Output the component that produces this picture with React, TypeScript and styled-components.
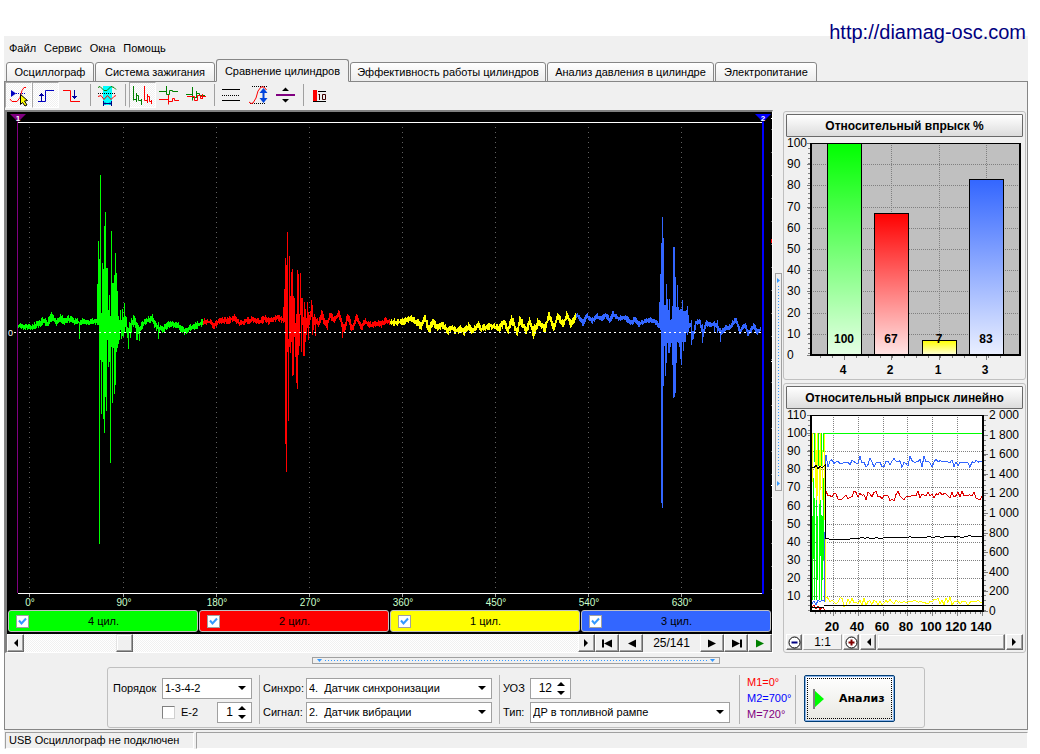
import React from 'react';
import styled, { createGlobalStyle } from 'styled-components';

const ui = '"Liberation Sans", Arial, sans-serif';
const GREEN = '#00ff00';
const RED = '#ff0000';
const YELLOW = '#ffff00';
const BLUE = '#3366ff';

const GlobalStyle = createGlobalStyle`
  * { box-sizing: border-box; }
  body { margin: 0; background: #fff; font: 11px/14px ${ui}; color: #000; }
  button, input, select { font: inherit; color: inherit; margin: 0; }
`;

/* ---------- shell ---------- */
const Page = styled.div`
  padding: 0 12px 4px 4px;
  min-width: 960px;
`;
const SiteBar = styled.header`
  height: 36px;
  display: flex;
  justify-content: flex-end;
  align-items: flex-end;
  overflow: visible;
`;
const SiteLink = styled.a`
  position: relative;
  z-index: 2;
  font-size: 20px;
  line-height: 24px;
  color: #000080;
  text-decoration: none;
  margin-bottom: -8px;
  padding-right: 2px;
`;
const AppWindow = styled.main`
  background: #f0f0f0;
`;
const MenuBar = styled.nav`
  display: flex;
  align-items: center;
  gap: 8px;
  height: 23px;
  padding: 0 5px;
`;
const MenuItem = styled.button`
  border: 0;
  padding: 0;
  background: none;
`;
const TabBar = styled.div`
  display: flex;
  align-items: flex-end;
  height: 23px;
  padding-left: 2px;
  gap: 1px;
  margin-bottom: -1px;
`;
const Tab = styled.button<{ $w: number; $active?: boolean }>`
  width: ${p => p.$w}px;
  height: ${p => (p.$active ? 23 : 20)}px;
  padding: 0;
  white-space: nowrap;
  border: 1px solid #868686;
  border-bottom-color: ${p => (p.$active ? '#f0f0f0' : '#868686')};
  border-radius: 3px 3px 0 0;
  background: ${p => (p.$active ? '#f0f0f0' : 'linear-gradient(#fff, #ececec)')};
`;
const Panel = styled.section`
  border: 1px solid #868686;
  padding-bottom: 1px;
`;
const ToolBar = styled.div`
  display: flex;
  height: 28px;
`;
const ToolButton = styled.button<{ $on?: boolean }>`
  width: 27px;
  height: 26px;
  padding: 0;
  border: 1px solid;
  border-color: ${p => (p.$on ? '#a8a8a8 #fff #fff #a8a8a8' : 'transparent')};
  background: ${p => (p.$on ? 'repeating-conic-gradient(#fff 0 25%, #f0f0f0 0 50%) 0 0 / 2px 2px' : 'none')};
  svg { display: block; margin: -1px; }
`;
const ToolSeparator = styled.span`
  width: 1px;
  height: 22px;
  margin: 2px 3px 0 4px;
  background: #a0a0a0;
`;
const WorkArea = styled.div`
  display: flex;
  padding-right: 1px;
`;

/* ---------- scope ---------- */
const ScopeFrame = styled.div`
  flex: 1;
  min-width: 0;
  border: solid;
  border-width: 2px 1px 1px 2px;
  border-color: #808080 #fff #fff #808080;
`;
const ScopeScreen = styled.svg`
  display: block;
  width: 100%;
  height: 497px;
  background: #000;
`;
const CylinderBar = styled.div`
  display: flex;
  gap: 1px;
  padding: 1px 1px 2px;
  background: #000;
`;
const CylinderCell = styled.label<{ $color: string }>`
  flex: 1;
  display: flex;
  align-items: center;
  height: 22px;
  padding: 0 7px;
  border: 1px solid #c0c0c0;
  border-radius: 3px;
  background: ${p => p.$color};
`;
const CylinderName = styled.span`
  flex: 1;
  text-align: center;
  padding-right: 12px;
`;
const Check = styled.input`
  appearance: none;
  width: 13px;
  height: 13px;
  border: 1px solid #a0a0a0;
  background: #fff;
  &:checked {
    background: #fff url("data:image/svg+xml,%3Csvg xmlns='http://www.w3.org/2000/svg' viewBox='0 0 11 11'%3E%3Cpath d='M2 4.500L4.500 7.500L9 2.500' fill='none' stroke='%233399ff' stroke-width='2'/%3E%3C/svg%3E");
  }
`;
const ScrollRow = styled.div`
  display: flex;
  height: 18px;
  background: #f0f0f0;
`;
const ScrollTrack = styled.div`
  flex: 1;
  display: flex;
  padding-left: 92px;
  background: repeating-conic-gradient(#fff 0 25%, #f0f0f0 0 50%) 0 0 / 2px 2px;
`;
const Thumb = styled.span<{ $wide?: boolean }>`
  width: ${p => (p.$wide ? 'auto' : '17px')};
  flex: ${p => (p.$wide ? '1' : 'none')};
  border: 1px solid;
  border-color: #e3e3e3 #696969 #696969 #e3e3e3;
  box-shadow: inset -1px -1px #a0a0a0, inset 1px 1px #fff;
  background: #f0f0f0;
`;
const KeyButton = styled.button<{ $w: number }>`
  width: ${p => p.$w}px;
  padding: 0;
  display: flex;
  align-items: center;
  justify-content: center;
  border: 1px solid;
  border-color: #fff #696969 #696969 #fff;
  box-shadow: inset -1px -1px #a0a0a0;
  background: #f0f0f0;
`;
const FrameCounter = styled.output`
  width: 57px;
  text-align: center;
  font-size: 12px;
  line-height: 18px;
`;

/* ---------- splitters ---------- */
const SplitColumn = styled.div`
  width: 10px;
  display: flex;
  align-items: center;
  justify-content: center;
`;
const SplitRow = styled.div`
  height: 14px;
  display: flex;
  align-items: center;
  justify-content: center;
`;
const Grip = styled.button<{ $vertical?: boolean }>`
  display: flex;
  flex-direction: ${p => (p.$vertical ? 'column' : 'row')};
  align-items: center;
  gap: 3px;
  padding: ${p => (p.$vertical ? '4px 0' : '0 4px')};
  width: ${p => (p.$vertical ? 7 : 408)}px;
  height: ${p => (p.$vertical ? 218 : 7)}px;
  border: 1px solid #a0a0a0;
  background: #f0f0f0;
  svg { flex: none; }
`;
const GripDots = styled.span<{ $vertical?: boolean }>`
  flex: 1;
  width: ${p => (p.$vertical ? '1px' : 'auto')};
  height: ${p => (p.$vertical ? 'auto' : '1px')};
  background: repeating-linear-gradient(${p => (p.$vertical ? 'to bottom' : 'to right')}, #3399ff 0 1px, transparent 1px 3px);
`;

/* ---------- right side ---------- */
const SideColumn = styled.aside`
  width: 243px;
  padding-top: 1px;
  display: flex;
  flex-direction: column;
  gap: 3px;
`;
const ChartCard = styled.section`
  border: 1px solid #c0c0c0;
  border-radius: 3px;
  padding: 2px;
  background: #f0f0f0;
  svg { display: block; }
`;
const ChartTitle = styled.button`
  display: block;
  width: 100%;
  height: 23px;
  padding: 0;
  border: 1px solid #696969;
  border-radius: 1px;
  font-weight: bold;
  font-size: 12px;
  background: linear-gradient(#fff, #dcdcdc);
`;
const ZoomRow = styled.div`
  display: flex;
  gap: 1px;
  height: 16px;
`;
const Ratio = styled.output`
  width: 39px;
  border: 1px solid;
  border-color: #fff #a0a0a0 #a0a0a0 #fff;
  text-align: center;
  font-size: 12px;
  line-height: 14px;
`;

/* ---------- control strip ---------- */
const ControlBox = styled.form`
  width: 818px;
  height: 61px;
  margin: 0 auto;
  padding: 7px 5px 3px;
  display: flex;
  border: 1px solid #c0c0c0;
  border-radius: 3px;
`;
const Fields = styled.div<{ $label: number }>`
  display: grid;
  grid-template-columns: ${p => p.$label}px auto;
  grid-template-rows: 20px 20px;
  row-gap: 4px;
  align-items: center;
  padding-top: 3px;
`;
const VRule = styled.span<{ $before: number; $after: number }>`
  width: 1px;
  height: 49px;
  margin: 0 ${p => p.$after}px 0 ${p => p.$before}px;
  background: #b4b4b4;
`;
const Combo = styled.div<{ $w: number }>`
  position: relative;
  width: ${p => p.$w}px;
  height: 21px;
  svg { position: absolute; right: 6px; top: 8px; pointer-events: none; }
`;
const Select = styled.select`
  appearance: none;
  display: block;
  width: 100%;
  height: 100%;
  padding: 0 16px 0 2px;
  border: 1px solid #a0a0a0;
  border-radius: 0;
  background: #fff;
  white-space: pre;
`;
const SpinBox = styled.span<{ $w: number }>`
  display: flex;
  align-items: center;
  width: ${p => p.$w}px;
  height: 21px;
  padding-right: 5px;
  border: 1px solid #a0a0a0;
  background: #fff;
`;
const SpinInput = styled.input`
  flex: 1;
  min-width: 0;
  padding: 0 5px 0 0;
  border: 0;
  background: none;
  text-align: right;
  font-size: 12px;
`;
const SpinLine = styled.div`
  display: flex;
  align-items: center;
  justify-content: space-between;
`;
const PlainCheck = styled(Check)`
  border-color: #808080 #d0d0d0 #d0d0d0 #808080;
`;
const CheckLabel = styled.label`
  display: flex;
  align-items: center;
  gap: 6px;
`;
const Marks = styled.div`
  width: 48px;
  display: flex;
  flex-direction: column;
  gap: 2px;
`;
const Mark = styled.span<{ $color: string }>`
  color: ${p => p.$color};
  line-height: 14px;
`;
const RunButton = styled.button`
  display: flex;
  align-items: center;
  gap: 14px;
  width: 91px;
  height: 47px;
  padding: 0 8px;
  border: 1px solid #003c74;
  border-radius: 2px;
  box-shadow: inset 0 0 0 1px #8ab4ea;
  outline: 1px dotted #000;
  outline-offset: -4px;
  background: linear-gradient(#fff, #e8e8e2);
  font: bold 11px/14px "DejaVu Sans", sans-serif;
`;

const StatusBar = styled.footer`
  display: flex;
  gap: 2px;
  height: 19px;
  padding: 2px 0 0 1px;
`;
const StatusCell = styled.span<{ $w?: number }>`
  flex: ${p => (p.$w ? 'none' : '1')};
  width: ${p => (p.$w ? `${p.$w}px` : 'auto')};
  padding-left: 3px;
  line-height: 15px;
  border: 1px solid;
  border-color: #a0a0a0 #fff #fff #a0a0a0;
`;

/* ---------- signal data ---------- */
type Pt = [number, number];
type Spike = [number, number, number];

function rng(seed: number) {
  let s = seed;
  return () => {
    s = (s * 16807) % 2147483647;
    return s / 2147483647;
  };
}

function levelAt(points: Pt[], x: number) {
  for (let i = 1; i < points.length; i++) {
    if (x <= points[i][0]) {
      const [x0, y0] = points[i - 1];
      const [x1, y1] = points[i];
      return y0 + ((y1 - y0) * (x - x0)) / (x1 - x0 || 1);
    }
  }
  return points[points.length - 1][1];
}

function envelope(points: Pt[], spikes: Spike[], amp: number, seed: number) {
  const rand = rng(seed);
  const byX = new Map(spikes.map(s => [s[0], s] as const));
  let d = '';
  let prev = points[0][1];
  for (let x = points[0][0]; x < points[points.length - 1][0]; x++) {
    const s = byX.get(x);
    const mid = levelAt(points, x);
    let top = Math.round(Math.min(mid, prev) - 1 - rand() * amp);
    let bottom = Math.round(Math.max(mid, prev) + 1 + rand() * amp);
    if (s) {
      top = s[1];
      bottom = s[2];
    }
    prev = mid;
    d += `M${x + 0.5} ${top}V${bottom}`;
  }
  return d;
}

const traces = [
  {
    color: GREEN, amp: 3, seed: 11,
    base: [[18,326],[30,327],[37,325],[42,321],[47,323],[51,316],[55,323],[60,317],[63,322],[68,319],[75,322],[90,322],[97,321],[118,325],[130,326],[133,320],[138,330],[144,322],[151,318],[156,328],[162,329],[168,324],[176,325],[183,331],[190,328],[197,325],[203,322]] as Pt[],
    spikes: [[79,322,339],[97,284,325],[98,241,325],[99,259,544],[100,175,360],[101,313,414],[102,263,362],[103,269,419],[104,226,433],[105,212,397],[106,268,411],[107,268,340],[108,310,367],[109,295,362],[110,316,463],[111,231,347],[112,283,403],[113,283,348],[114,275,394],[115,253,385],[116,273,352],[117,291,348],[118,316,344],[119,320,340],[120,310,330],[121,320,339],[122,309,336],[123,317,337],[124,303,332],[125,316,327],[126,317,333],[127,327,338],[128,328,349],[129,322,333],[130,323,338],[131,318,333],[133,315,327],[136,322,340],[137,323,340],[139,327,341],[158,322,339]] as Spike[],
  },
  {
    color: RED, amp: 3, seed: 29,
    base: [[203,322],[210,322],[213,325],[220,320],[226,321],[233,318],[238,323],[245,321],[252,320],[260,321],[264,318],[268,321],[276,317],[283,320],[316,321],[318,324],[321,312],[323,321],[326,326],[329,315],[333,321],[338,313],[341,324],[343,330],[347,316],[351,329],[356,317],[360,327],[364,322],[370,325],[380,324],[385,321],[390,322]] as Pt[],
    spikes: [[283,307,323],[284,289,322],[285,258,444],[286,265,472],[287,232,352],[288,339,421],[289,256,347],[290,296,353],[291,272,342],[292,269,376],[293,296,375],[294,298,337],[295,323,357],[296,314,383],[297,270,389],[298,274,355],[299,314,346],[300,273,315],[301,298,352],[302,298,325],[303,317,356],[304,302,356],[305,309,342],[306,318,335],[307,302,328],[308,312,340],[309,315,325],[310,311,320],[311,300,317],[312,305,335],[313,317,330],[314,314,325],[315,317,336],[342,322,338]] as Spike[],
  },
  {
    color: YELLOW, amp: 3, seed: 47,
    base: [[390,322],[400,322],[410,319],[417,323],[420,326],[424,318],[428,330],[432,322],[436,328],[441,324],[447,331],[451,327],[455,331],[460,328],[463,332],[468,326],[471,331],[477,325],[480,329],[485,327],[492,326],[498,329],[503,322],[507,330],[511,319],[516,333],[519,319],[525,331],[529,321],[533,335],[537,322],[544,329],[548,315],[553,328],[557,315],[562,325],[566,315],[570,325],[576,314]] as Pt[],
    spikes: [[532,326,336],[533,326,339],[534,324,336]] as Spike[],
  },
  {
    color: BLUE, amp: 2, seed: 83,
    base: [[576,315],[582,323],[586,316],[591,321],[596,316],[600,319],[605,315],[609,321],[612,314],[618,319],[624,317],[630,323],[634,319],[638,324],[645,321],[650,320],[656,323],[659,327],[688,325],[690,326],[692,338],[695,322],[699,322],[702,335],[705,323],[709,325],[713,324],[716,325],[720,334],[724,328],[728,328],[735,320],[739,331],[744,325],[747,334],[753,326],[756,333],[761,328]] as Pt[],
    spikes: [[659,302,328],[660,274,330],[661,243,503],[662,217,508],[663,238,386],[664,305,346],[665,305,376],[666,284,363],[667,299,343],[668,310,353],[669,299,353],[670,320,347],[671,319,343],[672,306,365],[673,247,398],[674,247,397],[675,277,393],[676,307,363],[677,285,342],[678,307,343],[679,310,347],[680,309,359],[681,309,365],[682,300,342],[683,311,351],[684,311,342],[685,311,342],[686,310,333],[687,306,335],[688,315,332],[691,320,345],[702,324,343],[720,328,342],[717,320,333],[714,321,333]] as Spike[],
  },
];

const angles = [0, 90, 180, 270, 360, 450, 540, 630];
const angleX = (i: number) => (i === 0 ? 29 : 123 + (i - 1) * 93);
const share = (x: number) => `${((x - 7) / 765) * 100}%`;

function Scope() {
  return (
    <ScopeScreen role="img" aria-label="Осциллограмма">
      <svg width="100%" height="100%" viewBox="7 112 765 497" preserveAspectRatio="none" shapeRendering="crispEdges">
        {angles.map((a, i) => (
          <g key={a}>
            <path d={`M${angleX(i) + 0.5} 127V590`} stroke="#606060" strokeDasharray="1 4" />
            <path d={`M${angleX(i) + 0.5} 594V597`} stroke="#a0a0a0" />
          </g>
        ))}
        <path d="M18 122.500H763M18 593.500H763" stroke="#fff" />
        <path d="M17.500 122V593" stroke="#800080" />
        <path d="M763 122V594" stroke="#0000ff" strokeWidth="2" />
        <path d="M771.500 129V590" stroke="#707070" strokeDasharray="1 22" />
        <path d="M771.500 118v1M771.500 361v1M771.500 485v1" stroke="#fff" />
        <path d="M771.500 239v4" stroke="#ff0000" />
        {traces.map(t => (
          <path key={t.color} d={envelope(t.base, t.spikes, t.amp, t.seed)} stroke={t.color} fill="none" />
        ))}
        <path d="M14 332.500H761" stroke="#fff" strokeDasharray="2 3" />
      </svg>
      <svg x={share(17)} y="2" overflow="visible">
        <path d="M-7 0H9L1 8Z" fill="#800080" />
        <text x="1" y="7" fill="#fff" fontSize="8" fontWeight="bold" textAnchor="middle">1</text>
      </svg>
      <svg x={share(762)} y="2" overflow="visible">
        <path d="M-7 0H9L1 8Z" fill="#0000ff" />
        <text x="1" y="7" fill="#fff" fontSize="8" fontWeight="bold" textAnchor="middle">2</text>
      </svg>
      <text x="1" y="224" fill="#fff" fontSize="9">0</text>
      {angles.map((a, i) => (
        <text key={a} x={share(angleX(i) + 1)} y="494" fill="#ccffcc" fontSize="10" textAnchor="middle">{a}°</text>
      ))}
    </ScopeScreen>
  );
}

/* ---------- bar chart ---------- */
const bars = [
  { cyl: 4, value: 100, color: GREEN, x: 827, top: 143 },
  { cyl: 2, value: 67, color: RED, x: 874, top: 213 },
  { cyl: 1, value: 7, color: YELLOW, x: 922, top: 340 },
  { cyl: 3, value: 83, color: BLUE, x: 969, top: 179 },
];

function BarChart() {
  const rows = Array.from({ length: 11 }, (_, i) => ({ v: 100 - i * 10, y: Math.round(143 + i * 21.2) }));
  return (
    <svg width="100%" viewBox="786 137 237 240" overflow="visible" fontFamily={ui} fontSize="12" role="img" aria-label="Относительный впрыск %">
      <defs>
        {bars.map(b => (
          <linearGradient key={b.cyl} id={`bar${b.cyl}`} x1="0" y1="0" x2="0" y2="1">
            <stop offset="0" stopColor={b.color} />
            <stop offset="1" stopColor={b.color} stopOpacity="0.1" />
          </linearGradient>
        ))}
      </defs>
      <g shapeRendering="crispEdges">
        <rect x="810" y="143" width="211" height="212" fill="#c0c0c0" />
        {rows.slice(1, 10).map(r => (
          <path key={r.v} d={`M811 ${r.y + 0.5}H1020`} stroke="#808080" strokeDasharray="1 1" />
        ))}
        {bars.map(b => (
          <path key={b.cyl} d={`M${b.x + 17.5} 143V355`} stroke="#808080" strokeDasharray="1 1" />
        ))}
        {rows.map(r => (
          <path key={r.v} d={`M807 ${r.y + 0.5}h3`} stroke="#808080" />
        ))}
        <path d="M809 143V355" stroke="#808080" strokeWidth="2" strokeDasharray="1 4" />
        {bars.map(b => (
          <g key={b.cyl}>
            <rect x={b.x} y={b.top} width="35" height={355 - b.top} fill="#fff" />
            <rect x={b.x + 0.5} y={b.top + 0.5} width="34" height={355 - b.top} fill={`url(#bar${b.cyl})`} stroke="#000" />
            <path d={`M${b.x + 17.5} 356v4`} stroke="#808080" />
          </g>
        ))}
        <path d="M820 357H1012" stroke="#808080" strokeWidth="2" strokeDasharray="1 11" />
        <path d="M810 143.500H1021" stroke="#000" />
        <path d="M811 143V355H1020V143" fill="none" stroke="#000" strokeWidth="2" />
      </g>
      {rows.map(r => (
        <text key={r.v} x="787" y={r.y + 4}>{r.v}</text>
      ))}
      <g fontWeight="bold" textAnchor="middle">
        {bars.map(b => (
          <g key={b.cyl}>
            <text x={b.x + 17} y="343">{b.value}</text>
            <text x={b.x + 16} y="374">{b.cyl}</text>
          </g>
        ))}
      </g>
    </svg>
  );
}

/* ---------- line chart ---------- */
function noisyLine(y0: number, y1: number, amp: number, seed: number, step: number) {
  const rand = rng(seed);
  let d = `M825 ${y0}`;
  for (let x = 826; x <= 982; x += step) {
    const t = (x - 826) / 156;
    const wave = (rand() - 0.5) * 2;
    const y = y0 + (y1 - y0) * t + wave * Math.abs(wave) * amp;
    d += `L${x} ${y.toFixed(1)}`;
  }
  return d;
}

function LineChart() {
  const left = Array.from({ length: 11 }, (_, i) => ({ v: 110 - i * 10, y: Math.round(415 + i * 18.1) }));
  const right = Array.from({ length: 11 }, (_, i) => ({ v: 2000 - i * 200, y: Math.round(415 + i * 19.6) }));
  const cols = [20, 40, 60, 80, 100, 120, 140].map((v, i) => ({ v, x: Math.round(833 + i * 24.8) }));
  const fmt = (v: number) => (v >= 1000 ? `${Math.floor(v / 1000)} ${String(v % 1000).padStart(3, '0')}` : String(v));
  return (
    <svg width="100%" viewBox="786 409 237 225" overflow="visible" fontFamily={ui} fontSize="12" role="img" aria-label="Относительный впрыск линейно">
      <g shapeRendering="crispEdges" fill="none">
        <rect x="810" y="415" width="174" height="196" fill="#fff" />
        {left.slice(1).map(r => (
          <path key={r.v} d={`M811 ${r.y + 0.5}H983`} stroke="#808080" strokeDasharray="1 1" />
        ))}
        {cols.slice(0, 6).map(c => (
          <path key={c.v} d={`M${c.x + 0.5} 415V611`} stroke="#808080" strokeDasharray="1 1" />
        ))}
        {left.map(r => (
          <path key={r.v} d={`M807 ${r.y + 0.5}h3`} stroke="#808080" />
        ))}
        {right.map(r => (
          <path key={r.v} d={`M984 ${r.y + 0.5}h4`} stroke="#808080" />
        ))}
        {cols.map(c => (
          <path key={c.v} d={`M${c.x + 0.5} 612v4`} stroke="#808080" />
        ))}
        <path d="M809 415V611M985 415V611" stroke="#808080" strokeWidth="2" strokeDasharray="1 4" />
        <path d="M815 613H983" stroke="#808080" strokeWidth="2" strokeDasharray="1 4" />
        <path d="M812.500 433V482M815.500 433V488M816.500 450V500M817.500 433V496M819.500 450V504M820.500 433V490M822.500 450V500M824.500 433V520M825.500 500V602" stroke={YELLOW} />
        <path d="M811.500 433V466M814.500 433V462M818.500 433V466M821.500 433V466M823.500 433V452M811.500 498V520M812.500 516V600M813.500 478V559M814.500 498V600M816.500 500V600M817.500 516V580M819.500 504V600M820.500 500V556M821.500 515V600M823.500 478V560M822.500 516V580" stroke={GREEN} />
        <path d="M824 433.500H982" stroke={GREEN} />
        <path d={noisyLine(462, 462, 7, 7, 2)} stroke={BLUE} />
        <path d={noisyLine(496, 496, 5, 19, 2)} stroke="#e00000" />
        <path d={noisyLine(602, 602, 5, 31, 2)} stroke={YELLOW} />
        <path d={noisyLine(539, 536, 1, 41, 3)} stroke="#000" />
        <path d="M811 605L814 601L816 605L818 600L820 602L822 600L824 601V532M825.500 532V460" stroke={BLUE} />
        <path d="M811 608L814 605L816 609L818 606L820 610L822 607L825 610" stroke="#e00000" />
        <path d="M811 467L814 468L816 465L818 469L820 466L822 468L825 465V539M811 607.500H824M824 605.500H983" stroke="#000" />
        <path d="M810 415.500H984" stroke="#000" />
        <path d="M811 415V611H983V415" stroke="#000" strokeWidth="2" />
      </g>
      {left.slice(0, 11).map(r => (
        <text key={r.v} x="787" y={r.y + 4}>{r.v}</text>
      ))}
      {right.map(r => (
        <text key={r.v} x="989" y={r.y + 4}>{fmt(r.v)}</text>
      ))}
      <g fontWeight="bold" textAnchor="middle" fontSize="13">
        {cols.map(c => (
          <text key={c.v} x={c.x - 1} y="631">{c.v}</text>
        ))}
      </g>
    </svg>
  );
}

/* ---------- small glyphs ---------- */
const Tri = ({ dir, color = '#000', bar }: { dir: 'left' | 'right'; color?: string; bar?: boolean }) => (
  <svg width="11" height="9" viewBox="0 0 11 9" aria-hidden="true">
    <g transform={dir === 'left' ? 'translate(11 0) scale(-1 1)' : undefined}>
      <path d="M1 0.500L9 4.500L1 8.500Z" fill={color} />
      {bar && <path d="M10 0.500V8.500" stroke={color} strokeWidth="2" />}
    </g>
  </svg>
);
const SmallTri = ({ dir }: { dir: 'left' | 'right' }) => (
  <svg width="5" height="8" viewBox="0 0 5 8" aria-hidden="true">
    <path d={dir === 'left' ? 'M5 0V8L1 4Z' : 'M0 0V8L4 4Z'} />
  </svg>
);
const DropArrow = () => (
  <svg width="8" height="4" viewBox="0 0 8 4" aria-hidden="true"><path d="M0 0H8L4 4Z" /></svg>
);
const SpinArrows = () => (
  <svg width="8" height="13" viewBox="0 0 8 13" aria-hidden="true"><path d="M0 4H8L4 0ZM0 9H8L4 13Z" /></svg>
);
const GripArrow = ({ vertical }: { vertical?: boolean }) => (
  <svg width="5" height="5" viewBox="0 0 5 5" aria-hidden="true">
    <path d={vertical ? 'M1 0V5L4 2.500Z' : 'M0 1H5L2.500 4Z'} fill="#3399ff" />
  </svg>
);
const ZoomGlyph = ({ plus }: { plus?: boolean }) => (
  <svg width="13" height="13" viewBox="0 0 13 13" fill="none" aria-hidden="true">
    <circle cx="6.500" cy="6.500" r="5.500" stroke="#000" fill="#fff" />
    <path d={plus ? 'M3.500 6.500H9.500M6.500 3.500V9.500' : 'M3.500 6.500H9.500'} stroke={plus ? '#800000' : '#000080'} strokeWidth="2" />
  </svg>
);

const Icon = ({ children }: { children: React.ReactNode }) => (
  <svg width="27" height="26" viewBox="0 0 27 26" fill="none" aria-hidden="true">{children}</svg>
);

const icons: Record<string, React.ReactNode> = {
  sync: (
    <Icon>
      <path d="M6 8V15L11 11.500Z" fill="#0000c0" />
      <path d="M11 11.500H21" stroke="#0000c0" strokeDasharray="1 1" />
      <path d="M5 17L7 19.500H12L15 15.500L17 8.500L19 5.500H21" stroke="#ff0000" />
      <path d="M15.500 12.500L22.500 18.500L19.500 19L22 23L20 24L17.500 20.500L15.500 22.500Z" fill="#ffff00" stroke="#000" />
    </Icon>
  ),
  rise: (
    <Icon>
      <path d="M6 19.500H13.500V8.500H22" stroke="#0000c0" />
      <path d="M9.500 11V19M7 13.500H12M8 12.500H11M9 11.500H10" stroke="#0000a0" />
    </Icon>
  ),
  fall: (
    <Icon>
      <path d="M4 8.500H11.500V19.500H21" stroke="#ff0000" />
      <path d="M15.500 8V17M13 14.500H18M14 15.500H17M15 16.500H16" stroke="#0000a0" />
    </Icon>
  ),
  gate: (
    <Icon>
      <rect x="9" y="4" width="9" height="19" fill="#00ffff" />
      <path d="M4 5.500L6 4.500L10 8.500H13L17 4.500L20 5.500L22 7.500" stroke="#008000" />
      <path d="M4 11.500H22" stroke="#000" strokeDasharray="1 1" />
      <path d="M4 14.500L7 13.500L10 17.500L13.500 13.500L17 17.500L20 14.500L22 13.500" stroke="#ff0000" />
      <path d="M9.500 19V24M17.500 19V24M10 21.500H17M11 20.500V22.500M16 20.500V22.500" stroke="#000080" />
    </Icon>
  ),
  serial: (
    <Icon>
      <path d="M4.500 4V18.500M4 17.500H7.500M7.500 11V20M7.500 13.500H9.500V18.500H12.500M12.500 17V23" stroke="#008000" />
      <path d="M15.500 4V18.500H18.500M18.500 12V21M18.500 14.500H20.500V19.500H23M22.500 18V22" stroke="#ff0000" />
    </Icon>
  ),
  split: (
    <Icon>
      <path d="M3 9.500H10.500M10.500 4V12.500H13.500V8.500H16.500V9.500H22" stroke="#008000" />
      <path d="M3 17.500H12.500M12.500 13V22.500M12.500 19.500H16.500V16.500H18.500V18.500H23" stroke="#ff0000" />
    </Icon>
  ),
  overlay: (
    <Icon>
      <path d="M3 12.500H9.500M9.500 5V18.500M9.500 15.500H13.500M13.500 9V16M13.500 11.500H16.500V13.500H22" stroke="#008000" />
      <path d="M4 14.500H11.500V18.500H14.500V13.500H17.500V16.500H20M18 14.500H23M19.500 12V17" stroke="#ff0000" />
    </Icon>
  ),
  levels: (
    <Icon>
      <path d="M4 7.500H22M4 18.500H22" stroke="#000" />
      <path d="M4 13.500H22" stroke="#000" strokeDasharray="1 1" />
    </Icon>
  ),
  swing: (
    <Icon>
      <path d="M7 4.500H22M5 21.500H20" stroke="#000" strokeDasharray="1 1" />
      <path d="M4 20L6 21.500L8 21L11 16L13 9L16 5L19 5L21.500 8" stroke="#ff0000" />
      <path d="M18.500 8V18" stroke="#0044dd" strokeWidth="2" />
      <path d="M14.500 11H22.500L18.500 6ZM14.500 16H22.500L18.500 21Z" fill="#0044dd" />
    </Icon>
  ),
  gap: (
    <Icon>
      <path d="M4 13H23" stroke="#800080" strokeWidth="2" />
      <path d="M10 9H17L13.500 5.500ZM10 17H17L13.500 20.500Z" fill="#000" />
    </Icon>
  ),
  top10: (
    <Icon>
      <rect x="6" y="8" width="4" height="11" fill="#ff0000" />
      <path d="M6 19.500H19M11 9.500H19" stroke="#000" />
      <path d="M12.500 12V18M11.500 12.500H12M15.500 12.500H18.500V17.500H15.500Z" stroke="#400000" />
    </Icon>
  ),
};

const tools: { id: string; name: string; on?: boolean; sep?: boolean }[] = [
  { id: 'sync', name: 'Синхронизация', on: true },
  { id: 'rise', name: 'Передний фронт', on: true },
  { id: 'fall', name: 'Задний фронт', sep: true },
  { id: 'gate', name: 'Окно измерения', sep: true },
  { id: 'serial', name: 'Последовательно', on: true },
  { id: 'split', name: 'Раздельно' },
  { id: 'overlay', name: 'Наложение', sep: true },
  { id: 'levels', name: 'Уровни' },
  { id: 'swing', name: 'Размах' },
  { id: 'gap', name: 'Интервал', sep: true },
  { id: 'top10', name: 'Гистограмма' },
];

const tabs: { name: string; w: number; active?: boolean }[] = [
  { name: 'Осциллограф', w: 88 },
  { name: 'Система зажигания', w: 120 },
  { name: 'Сравнение цилиндров', w: 133, active: true },
  { name: 'Эффективность работы цилиндров', w: 196 },
  { name: 'Анализ давления в цилиндре', w: 167 },
  { name: 'Электропитание', w: 102 },
];

const cylinders = [
  { name: '4 цил.', color: GREEN },
  { name: '2 цил.', color: RED },
  { name: '1 цил.', color: YELLOW },
  { name: '3 цил.', color: BLUE },
];

function ComboBox({ id, width, value }: { id: string; width: number; value: string }) {
  return (
    <Combo $w={width}>
      <Select id={id} defaultValue={value}><option>{value}</option></Select>
      <DropArrow />
    </Combo>
  );
}

function Spin({ id, width, value, label }: { id: string; width: number; value: string; label?: string }) {
  return (
    <SpinBox $w={width}>
      <SpinInput id={id} aria-label={label} defaultValue={value} inputMode="numeric" />
      <SpinArrows />
    </SpinBox>
  );
}

export default function App() {
  return (
    <Page>
      <GlobalStyle />
      <SiteBar><SiteLink href="http://diamag-osc.com">http://diamag-osc.com</SiteLink></SiteBar>
      <AppWindow>
        <MenuBar>
          {['Файл', 'Сервис', 'Окна', 'Помощь'].map(m => <MenuItem key={m} type="button">{m}</MenuItem>)}
        </MenuBar>
        <TabBar role="tablist">
          {tabs.map(t => (
            <Tab key={t.name} type="button" role="tab" aria-selected={!!t.active} $w={t.w} $active={t.active}>{t.name}</Tab>
          ))}
        </TabBar>
        <Panel>
          <ToolBar role="toolbar">
            {tools.map(t => (
              <React.Fragment key={t.id}>
                <ToolButton type="button" aria-label={t.name} $on={t.on}>{icons[t.id]}</ToolButton>
                {t.sep && <ToolSeparator />}
              </React.Fragment>
            ))}
          </ToolBar>
          <WorkArea>
            <ScopeFrame>
              <Scope />
              <CylinderBar>
                {cylinders.map(c => (
                  <CylinderCell key={c.name} $color={c.color}>
                    <Check type="checkbox" defaultChecked />
                    <CylinderName>{c.name}</CylinderName>
                  </CylinderCell>
                ))}
              </CylinderBar>
              <ScrollRow>
                <KeyButton type="button" aria-label="Влево" $w={17}><SmallTri dir="left" /></KeyButton>
                <ScrollTrack><Thumb /></ScrollTrack>
                <KeyButton type="button" aria-label="Вправо" $w={17}><SmallTri dir="right" /></KeyButton>
                <KeyButton type="button" aria-label="Первый кадр" $w={24}><Tri dir="left" bar /></KeyButton>
                <KeyButton type="button" aria-label="Предыдущий кадр" $w={24}><Tri dir="left" /></KeyButton>
                <FrameCounter>25/141</FrameCounter>
                <KeyButton type="button" aria-label="Следующий кадр" $w={24}><Tri dir="right" /></KeyButton>
                <KeyButton type="button" aria-label="Последний кадр" $w={24}><Tri dir="right" bar /></KeyButton>
                <KeyButton type="button" aria-label="Воспроизвести" $w={24}><Tri dir="right" color="#008000" /></KeyButton>
              </ScrollRow>
            </ScopeFrame>
            <SplitColumn>
              <Grip type="button" aria-label="Свернуть графики" $vertical>
                <GripArrow vertical /><GripDots $vertical /><GripArrow vertical />
              </Grip>
            </SplitColumn>
            <SideColumn>
              <ChartCard>
                <ChartTitle type="button">Относительный впрыск %</ChartTitle>
                <BarChart />
              </ChartCard>
              <ChartCard>
                <ChartTitle type="button">Относительный впрыск линейно</ChartTitle>
                <LineChart />
                <ZoomRow>
                  <KeyButton type="button" aria-label="Уменьшить" $w={16}><ZoomGlyph /></KeyButton>
                  <Ratio>1:1</Ratio>
                  <KeyButton type="button" aria-label="Увеличить" $w={16}><ZoomGlyph plus /></KeyButton>
                  <KeyButton type="button" aria-label="Назад" $w={16}><SmallTri dir="left" /></KeyButton>
                  <Thumb $wide />
                  <KeyButton type="button" aria-label="Вперёд" $w={17}><SmallTri dir="right" /></KeyButton>
                </ZoomRow>
              </ChartCard>
            </SideColumn>
          </WorkArea>
          <SplitRow>
            <Grip type="button" aria-label="Свернуть настройки"><GripArrow /><GripDots /><GripArrow /></Grip>
          </SplitRow>
          <ControlBox onSubmit={e => e.preventDefault()}>
            <Fields $label={49}>
              <label htmlFor="order">Порядок</label>
              <ComboBox id="order" width={90} value="1-3-4-2" />
              <span />
              <SpinLine>
                <CheckLabel><PlainCheck type="checkbox" />Е-2</CheckLabel>
                <Spin id="first" width={35} value="1" label="Первый цилиндр" />
              </SpinLine>
            </Fields>
            <VRule $before={7} $after={3} />
            <Fields $label={43}>
              <label htmlFor="sync">Синхро:</label>
              <ComboBox id="sync" width={186} value={'4.\u00a0 Датчик синхронизации'} />
              <label htmlFor="signal">Сигнал:</label>
              <ComboBox id="signal" width={186} value={'2.\u00a0 Датчик вибрации'} />
            </Fields>
            <VRule $before={7} $after={3} />
            <Fields $label={27}>
              <label htmlFor="advance">УОЗ</label>
              <Spin id="advance" width={41} value="12" />
              <label htmlFor="kind">Тип:</label>
              <ComboBox id="kind" width={200} value="ДР в топливной рампе" />
            </Fields>
            <VRule $before={9} $after={7} />
            <Marks>
              <Mark $color="#ff0000">M1=0°</Mark>
              <Mark $color="#0000ff">M2=700°</Mark>
              <Mark $color="#800080">M=720°</Mark>
            </Marks>
            <VRule $before={0} $after={8} />
            <RunButton type="submit">
              <svg width="12" height="20" viewBox="0 0 12 20" aria-hidden="true">
                <path d="M1 1V19L11 10Z" fill="#00ff00" />
                <path d="M1 0V20" stroke="#808080" strokeWidth="2" />
              </svg>
              Анализ
            </RunButton>
          </ControlBox>
        </Panel>
        <StatusBar>
          <StatusCell $w={189}>USB Осциллограф не подключен</StatusCell>
          <StatusCell />
        </StatusBar>
      </AppWindow>
    </Page>
  );
}
